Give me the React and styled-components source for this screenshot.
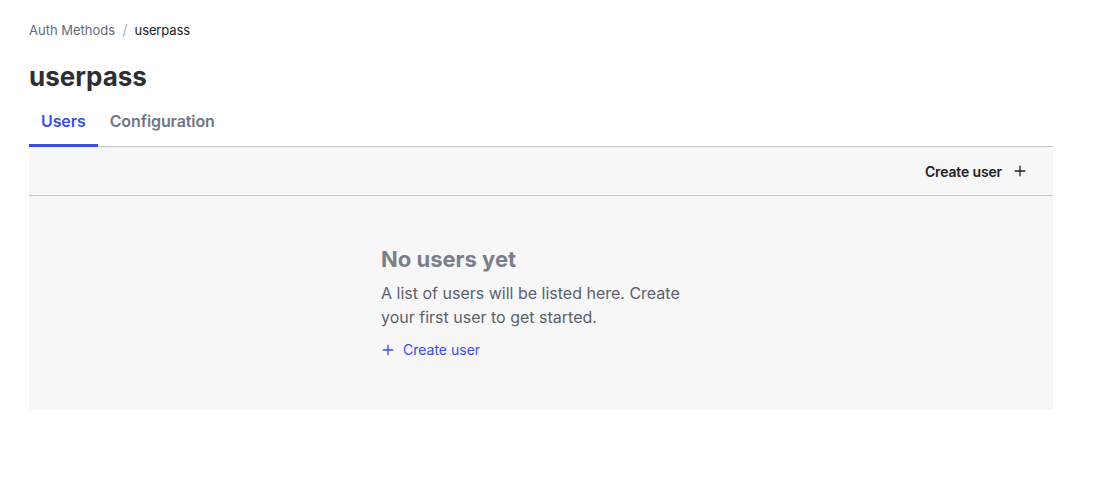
import React from "react";
import styled, { createGlobalStyle } from "styled-components";

const GlobalStyle = createGlobalStyle`
  body {
    margin: 0;
    background: #ffffff;
    font-family: Inter, "Noto Sans", sans-serif;
    color: #1f2124;
  }
`;

function PlusIcon({ size = 14, color = "currentColor" }) {
  return (
    <svg width={size} height={size} viewBox="0 0 16 16" fill="none">
      <path d="M8 2.5v11M2.5 8h11" stroke={color} strokeWidth="1.5" strokeLinecap="round" />
    </svg>
  );
}

export default function App() {
  return (
    <>
      <GlobalStyle />
      <Page>
        <Breadcrumb>
          <Crumb>Auth Methods</Crumb>
          <Slash>/</Slash>
          <Crumb current>userpass</Crumb>
        </Breadcrumb>
        <Title>userpass</Title>
        <Tabs>
          <Tab active>Users</Tab>
          <Tab>Configuration</Tab>
        </Tabs>
        <Toolbar>
          <ToolbarButton>
            Create user
            <PlusIcon size={14} />
          </ToolbarButton>
        </Toolbar>
        <Empty>
          <EmptyInner>
            <EmptyTitle>No users yet</EmptyTitle>
            <EmptyText>
              A list of users will be listed here. Create your first user to get started.
            </EmptyText>
            <EmptyLink>
              <PlusIcon size={14} />
              Create user
            </EmptyLink>
          </EmptyInner>
        </Empty>
      </Page>
    </>
  );
}

const Page = styled.div`
  width: 1024px;
  padding: 21px 0 0 29px;
`;

const Breadcrumb = styled.nav`
  display: flex;
  align-items: center;
  gap: 7px;
  font-size: 13px;
  line-height: 18px;
`;

const Crumb = styled.span`
  color: ${(p) => (p.current ? "#1f2124" : "#656a76")};
  letter-spacing: ${(p) => (p.current ? "-0.1px" : "0")};
`;

const Slash = styled.span`
  color: #b2b6bd;
  font-size: 15px;
`;

const Title = styled.h1`
  margin: 22px 0 0;
  font-size: 26px;
  line-height: 32px;
  font-weight: 700;
  color: #2d2f33;
`;

const Tabs = styled.div`
  display: flex;
  margin-top: 10px;
  border-bottom: 1px solid #c2c5cb;
`;

const Tab = styled.div`
  padding: 0 12px 8px;
  height: 36px;
  display: flex;
  align-items: center;
  font-size: 16px;
  font-weight: 600;
  letter-spacing: -0.1px;
  color: ${(p) => (p.active ? "#3b4de6" : "#6f7682")};
  box-shadow: ${(p) => (p.active ? "inset 0 -3px 0 #3b4de6" : "none")};
  margin-bottom: -1px;
`;

const Toolbar = styled.div`
  display: flex;
  justify-content: flex-end;
  align-items: center;
  height: 48px;
  background: #f7f7f7;
  border-bottom: 1px solid #c2c5cb;
  padding: 0 26px;
`;

const ToolbarButton = styled.button`
  display: flex;
  align-items: center;
  gap: 11px;
  border: none;
  background: none;
  padding: 0;
  font-family: inherit;
  font-size: 14px;
  font-weight: 600;
  letter-spacing: -0.15px;
  color: #1f2124;
`;

const Empty = styled.div`
  background: #f7f7f7;
  height: 214px;
  display: flex;
  justify-content: center;
  padding-top: 49px;
  box-sizing: border-box;
`;

const EmptyInner = styled.div`
  width: 320px;
`;

const EmptyTitle = styled.h2`
  margin: 0;
  font-size: 22px;
  line-height: 28px;
  font-weight: 700;
  color: #7b7f8a;
`;

const EmptyText = styled.p`
  margin: 8px 0 0;
  font-size: 16px;
  line-height: 24px;
  color: #5c616b;
`;

const EmptyLink = styled.a`
  display: inline-flex;
  align-items: center;
  gap: 8px;
  margin-top: 11px;
  font-size: 14px;
  line-height: 20px;
  color: #3b4de6;
  cursor: pointer;
`;
